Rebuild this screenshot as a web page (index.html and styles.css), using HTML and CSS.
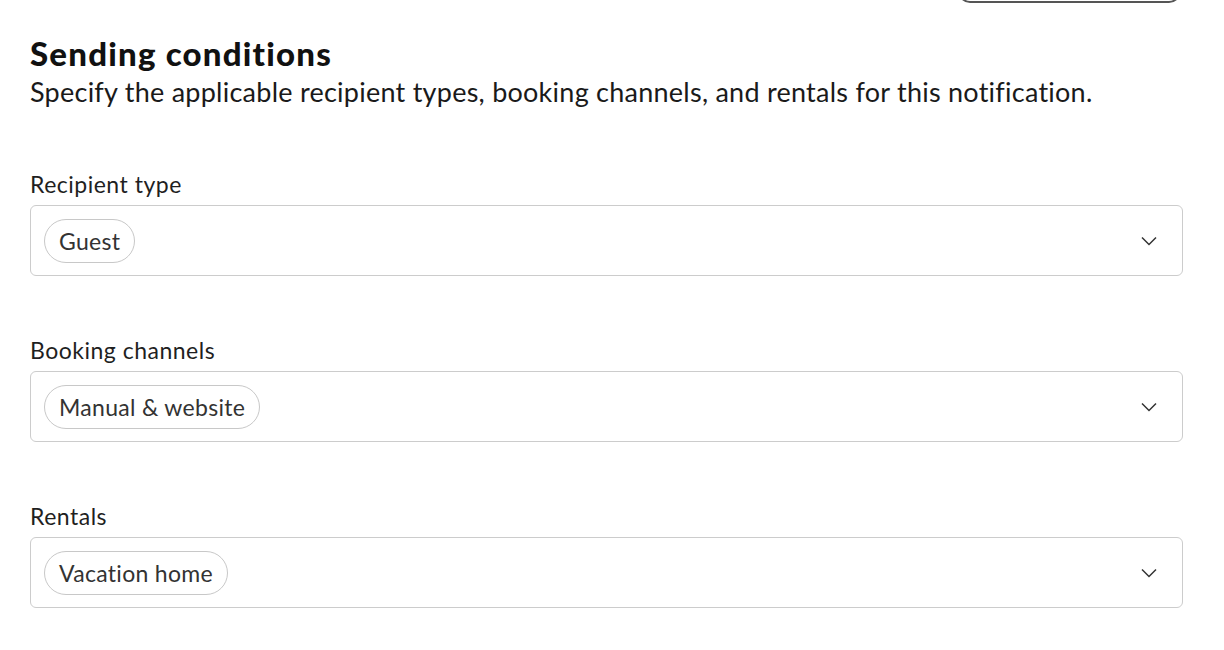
FILE: index.html
```html
<!DOCTYPE html>
<html lang="en">
<head>
<meta charset="utf-8">
<title>Sending conditions</title>
<link rel="stylesheet" href="styles.css">
</head>
<body>
<div class="page">
  <div class="topbar">
    <button class="top-btn" type="button" aria-label="Actions"></button>
  </div>
  <h2 class="title">Sending conditions</h2>
  <p class="subtitle">Specify the applicable recipient types, booking channels, and rentals for this notification.</p>

  <div class="field">
    <label class="label">Recipient type</label>
    <div class="select">
      <span class="chip">Guest</span>
      <svg class="chev" width="16" height="10" viewBox="0 0 16 10"><path d="M1 1.5 L8 8.5 L15 1.5" fill="none" stroke="#333" stroke-width="1.5"/></svg>
    </div>
  </div>

  <div class="field">
    <label class="label">Booking channels</label>
    <div class="select">
      <span class="chip">Manual &amp; website</span>
      <svg class="chev" width="16" height="10" viewBox="0 0 16 10"><path d="M1 1.5 L8 8.5 L15 1.5" fill="none" stroke="#333" stroke-width="1.5"/></svg>
    </div>
  </div>

  <div class="field">
    <label class="label">Rentals</label>
    <div class="select">
      <span class="chip">Vacation home</span>
      <svg class="chev" width="16" height="10" viewBox="0 0 16 10"><path d="M1 1.5 L8 8.5 L15 1.5" fill="none" stroke="#333" stroke-width="1.5"/></svg>
    </div>
  </div>
</div>
</body>
</html>
```
FILE: styles.css
```css
* { box-sizing: border-box; }
html, body { margin: 0; padding: 0; background: #fff; }
body {
  font-family: Lato, "Open Sans", sans-serif;
  color: #1a1a1a;
  overflow: hidden;
}
.page {
  width: 1153px;
  margin-left: 30px;
}
.topbar {
  display: flex;
  justify-content: flex-end;
  margin-top: -37px;
  padding-right: 2px;
}
.top-btn {
  width: 223px;
  height: 40px;
  border: 2px solid #555;
  border-radius: 12px;
  background: #fff;
}
.title {
  margin: 30px 0 0;
  font-size: 33px;
  line-height: 40px;
  font-weight: 900;
  letter-spacing: 1.2px;
  color: #111;
}
.subtitle {
  margin: 2px 0 0;
  font-size: 27px;
  line-height: 34px;
  letter-spacing: 0.25px;
  color: #1a1a1a;
}
.field {
  display: flex;
  flex-direction: column;
  gap: 7px;
  margin-top: 61px;
}
.field + .field { margin-top: 60px; }
.label {
  font-size: 23px;
  line-height: 28px;
  letter-spacing: 0.5px;
  color: #1f1f1f;
}
.select {
  height: 71px;
  border: 1px solid #cccccc;
  border-radius: 6px;
  padding: 0 25px 0 13px;
  display: flex;
  align-items: center;
  justify-content: space-between;
}
.chip {
  height: 44px;
  display: inline-flex;
  align-items: center;
  padding: 0 14px;
  border: 1.5px solid #c8c8c8;
  border-radius: 22px;
  font-size: 23px;
  letter-spacing: 0.3px;
  color: #333;
}
.chev { display: block; }
```
